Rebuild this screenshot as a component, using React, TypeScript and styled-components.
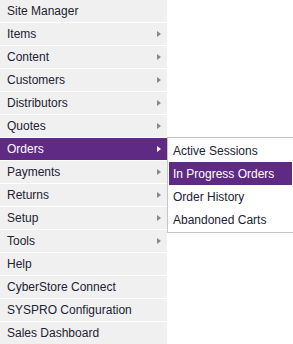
import React from "react";
import styled, { createGlobalStyle } from "styled-components";

const GlobalStyle = createGlobalStyle`
    html, body {
        margin: 0;
        padding: 0;
        background: #ffffff;
    }
    body {
        font-family: "Liberation Sans", Arial, sans-serif;
        font-size: 12px;
    }
`;

const purple = "#5e2a84";

const Menu = styled.ul`
    list-style: none;
    margin: 0;
    padding: 0;
    width: 167px;
    background: #f0f0f0;
`;

const MenuItem = styled.li<{ $active?: boolean }>`
    position: relative;
    display: flex;
    align-items: center;
    justify-content: space-between;
    height: 22px;
    padding: 0 6px 0 7px;
    border-bottom: 1px solid #ffffff;
    background: ${p => (p.$active ? purple : "transparent")};
    color: ${p => (p.$active ? "#ffffff" : "#222233")};
    cursor: default;

    &:last-child {
        border-bottom: 0;
    }
`;

const Arrow = styled.span<{ $active?: boolean }>`
    width: 0;
    height: 0;
    border-top: 3px solid transparent;
    border-bottom: 3px solid transparent;
    border-left: 4px solid ${p => (p.$active ? "#ffffff" : "#888888")};
`;

const SubMenu = styled.ul`
    position: absolute;
    top: -1px;
    left: 167px;
    list-style: none;
    margin: 0;
    padding: 1px;
    width: 123px;
    background: #ffffff;
    border: 1px solid #c6c6c6;
`;

const SubItem = styled.li<{ $active?: boolean }>`
    display: flex;
    align-items: center;
    height: 23px;
    padding: 0 4px;
    background: ${p => (p.$active ? purple : "transparent")};
    color: ${p => (p.$active ? "#ffffff" : "#222233")};
`;

const items: { label: string; sub?: boolean }[] = [
    { label: "Site Manager" },
    { label: "Items", sub: true },
    { label: "Content", sub: true },
    { label: "Customers", sub: true },
    { label: "Distributors", sub: true },
    { label: "Quotes", sub: true },
    { label: "Orders", sub: true },
    { label: "Payments", sub: true },
    { label: "Returns", sub: true },
    { label: "Setup", sub: true },
    { label: "Tools", sub: true },
    { label: "Help" },
    { label: "CyberStore Connect" },
    { label: "SYSPRO Configuration" },
    { label: "Sales Dashboard" },
];

const orderItems = ["Active Sessions", "In Progress Orders", "Order History", "Abandoned Carts"];

export default function App() {
    const open = "Orders";
    const hovered = "In Progress Orders";

    return (
        <>
            <GlobalStyle />
            <Menu>
                {items.map(item => {
                    const active = item.label === open;
                    return (
                        <MenuItem key={item.label} $active={active}>
                            <span>{item.label}</span>
                            {item.sub && <Arrow $active={active} />}
                            {active && (
                                <SubMenu>
                                    {orderItems.map(o => (
                                        <SubItem key={o} $active={o === hovered}>
                                            {o}
                                        </SubItem>
                                    ))}
                                </SubMenu>
                            )}
                        </MenuItem>
                    );
                })}
            </Menu>
        </>
    );
}
